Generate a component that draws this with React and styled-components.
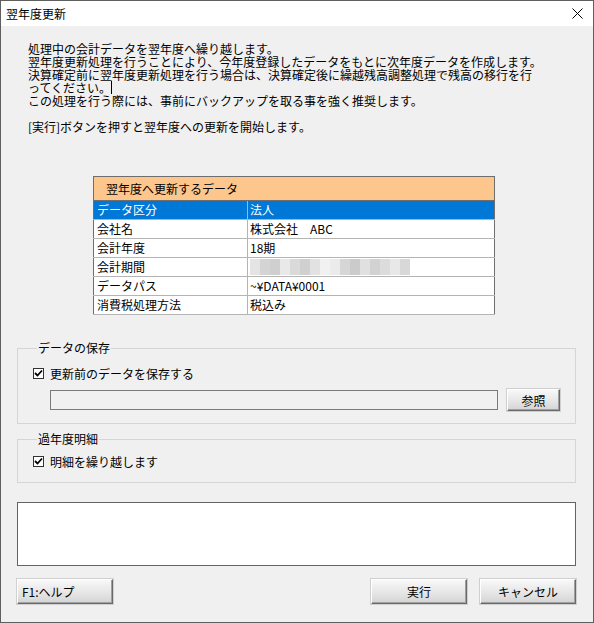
import React from 'react';
import styled, { createGlobalStyle } from 'styled-components';

const GlobalStyle = createGlobalStyle`
  html, body {
    margin: 0;
    padding: 0;
    background: #ffffff;
  }
  body {
    font-family: "Noto Sans CJK JP", "Liberation Sans", sans-serif;
    font-size: 12px;
    color: #000;
  }
`;

const rows = [
  { label: 'データ区分', value: '法人', selected: true },
  { label: '会社名', value: '株式会社　ABC' },
  { label: '会計年度', value: '18期' },
  { label: '会計期間', value: null },
  { label: 'データパス', value: '~¥DATA¥0001' },
  { label: '消費税処理方法', value: '税込み' },
];

const mosaic = [
  '#e4e4e4', '#d4d4d4', '#cfcfcf', '#e9e9e9', '#dadada', '#d0d0d0', '#e2e2e2',
  '#f1f1f1', '#ebebeb', '#d6d6d6', '#cbcbcb', '#e0e0e0', '#d2d2d2', '#dcdcdc',
  '#e8e8e8', '#d8d8d8',
];

const App = () => {
  return (
    <>
      <GlobalStyle />
      <Window>
        <TitleBar>
          <Title>翌年度更新</Title>
          <CloseButton>
            <svg width="11" height="11" viewBox="0 0 11 11">
              <path d="M0.5 0.5 L10.5 10.5 M10.5 0.5 L0.5 10.5" stroke="#000" strokeWidth="1" />
            </svg>
          </CloseButton>
        </TitleBar>
        <Body>
          <Description>
            <Line>処理中の会計データを翌年度へ繰り越します。</Line>
            <Line>翌年度更新処理を行うことにより、今年度登録したデータをもとに次年度データを作成します。</Line>
            <Line>決算確定前に翌年度更新処理を行う場合は、決算確定後に繰越残高調整処理で残高の移行を行</Line>
            <Line>ってください。<Caret /></Line>
            <Line>この処理を行う際には、事前にバックアップを取る事を強く推奨します。</Line>
            <Line>&nbsp;</Line>
            <Line>[実行]ボタンを押すと翌年度への更新を開始します。</Line>
          </Description>

          <DataTable>
            <thead>
              <tr>
                <HeaderCell colSpan={2}>翌年度へ更新するデータ</HeaderCell>
              </tr>
            </thead>
            <tbody>
              {rows.map((row) => (
                <Row key={row.label} $selected={row.selected}>
                  <LabelCell>{row.label}</LabelCell>
                  <ValueCell>
                    {row.value === null ? (
                      <Mosaic>
                        {mosaic.map((c, i) => (
                          <span key={i} style={{ background: c }} />
                        ))}
                      </Mosaic>
                    ) : (
                      row.value
                    )}
                  </ValueCell>
                </Row>
              ))}
            </tbody>
          </DataTable>

          <GroupBox $pt={10} $pb={12}>
            <Legend>データの保存</Legend>
            <CheckRow>
              <CheckBox />
              <span>更新前のデータを保存する</span>
            </CheckRow>
            <PathRow>
              <PathField />
              <Button $w={53} $h={22}>参照</Button>
            </PathRow>
          </GroupBox>

          <GroupBox $pt={7} $pb={13} $mt={8}>
            <Legend>過年度明細</Legend>
            <CheckRow>
              <CheckBox />
              <span>明細を繰り越します</span>
            </CheckRow>
          </GroupBox>

          <LogArea />

          <ButtonBar>
            <Button $w={96} $align="left">F1:ヘルプ</Button>
            <Spacer />
            <Button $w={96}>実行</Button>
            <Button $w={96}>キャンセル</Button>
          </ButtonBar>
        </Body>
      </Window>
    </>
  );
};

const CheckBox = () => (
  <CheckBoxBox>
    <svg width="9" height="9" viewBox="0 0 9 9">
      <path d="M1 4 L3.5 6.5 L8 1.5" stroke="#000" strokeWidth="1.8" fill="none" />
    </svg>
  </CheckBoxBox>
);

const Window = styled.div`
  width: 594px;
  height: 623px;
  box-sizing: border-box;
  border: 1px solid #5f5f5f;
  background: #f0f0f0;
  display: flex;
  flex-direction: column;
  overflow: hidden;
`;

const TitleBar = styled.div`
  height: 25px;
  background: #ffffff;
  display: flex;
  align-items: center;
  justify-content: space-between;
  padding: 0 10px 0 5px;
`;

const Title = styled.div`
  font-size: 12px;
  line-height: 14px;
`;

const CloseButton = styled.div`
  width: 11px;
  height: 11px;
  display: flex;
`;

const Body = styled.div`
  display: flex;
  flex-direction: column;
  padding: 0 17px 0 16px;
`;

const Description = styled.div`
  margin-top: 16px;
  padding-left: 11px;
  font-size: 12px;
  line-height: 13px;
  white-space: nowrap;
`;

const Line = styled.div`
  height: 13px;
`;

const Caret = styled.span`
  display: inline-block;
  width: 1px;
  height: 13px;
  background: #000;
  vertical-align: top;
`;

const DataTable = styled.table`
  margin: 43px 0 0 76px;
  width: 402px;
  border-collapse: collapse;
  border: 1px solid #6e6e6e;
  background: #ffffff;
  font-size: 12px;
`;

const HeaderCell = styled.th`
  height: 23px;
  padding: 0 0 0 12px;
  background: #fcc68d;
  text-align: left;
  font-weight: normal;
  font-size: 12px;
  border-bottom: 1px solid #6e6e6e;
`;

const Row = styled.tr`
  height: 19px;
  background: ${(p) => (p.$selected ? '#0078d7' : '#ffffff')};
  color: ${(p) => (p.$selected ? '#ffffff' : '#000000')};
  td {
    border-bottom: 1px solid #b4b4b4;
  }
`;

const LabelCell = styled.td`
  width: 150px;
  padding: 0 0 0 3px;
  border-right: 1px solid #b4b4b4;
  line-height: 18px;
`;

const ValueCell = styled.td`
  padding: 0 0 0 2px;
  line-height: 18px;
`;

const Mosaic = styled.div`
  display: flex;
  height: 16px;
  width: 160px;
  span {
    flex: 1;
  }
`;

const GroupBox = styled.fieldset`
  margin: ${(p) => p.$mt ?? 26}px 0 0 0;
  padding: ${(p) => p.$pt}px 15px ${(p) => p.$pb}px 15px;
  border: 1px solid #d5d5d5;
  min-width: 0;
`;

const Legend = styled.legend`
  margin-left: 4px;
  padding: 0 1px;
  font-size: 12px;
  line-height: 14px;
`;

const CheckRow = styled.div`
  display: flex;
  align-items: center;
  gap: 6px;
  height: 16px;
  font-size: 12px;
`;

const CheckBoxBox = styled.div`
  width: 11px;
  height: 11px;
  box-sizing: border-box;
  border: 1px solid #333333;
  background: #ffffff;
  display: flex;
  align-items: center;
  justify-content: center;
`;

const PathRow = styled.div`
  display: flex;
  align-items: center;
  gap: 9px;
  margin: 8px 0 0 17px;
`;

const PathField = styled.div`
  width: 448px;
  height: 20px;
  box-sizing: border-box;
  border: 1px solid #7a7a7a;
  background: #f0f0f0;
`;

const Button = styled.div`
  width: ${(p) => p.$w}px;
  height: ${(p) => p.$h ?? 25}px;
  box-sizing: border-box;
  display: flex;
  align-items: center;
  justify-content: ${(p) => (p.$align === 'left' ? 'flex-start' : 'center')};
  padding-left: ${(p) => (p.$align === 'left' ? '4px' : '0')};
  font-size: 12px;
  background: linear-gradient(#f8f8f8, #e6e6e6 55%, #d4d4d4);
  border-top: 1px solid #ffffff;
  border-left: 1px solid #ffffff;
  border-right: 1px solid #6a6a6a;
  border-bottom: 1px solid #6a6a6a;
  box-shadow: inset -1px -1px 0 #a0a0a0, 0 0 0 1px #cfcfcf;
`;

const LogArea = styled.div`
  margin-top: 19px;
  height: 64px;
  box-sizing: border-box;
  border: 1px solid #646464;
  background: #ffffff;
`;

const ButtonBar = styled.div`
  display: flex;
  gap: 13px;
  margin-top: 13px;
`;

const Spacer = styled.div`
  flex: 1;
`;

export default App;
